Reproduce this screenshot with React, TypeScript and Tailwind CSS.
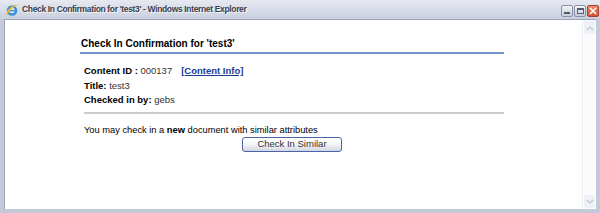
import React from "react";

const sans = { fontFamily: "'Liberation Sans', Arial, sans-serif" };

function IeLogo() {
  return (
    <svg width="14" height="14" viewBox="0 0 16 16">
      <circle cx="8" cy="8.5" r="6" fill="#3d8fd8" />
      <circle cx="8" cy="8.5" r="3.2" fill="#dfeffc" />
      <rect x="4.5" y="8" width="7" height="1.6" fill="#3d8fd8" />
      <path d="M1 13 C 3 6, 10 1, 15 2 C 12 3, 6 7, 3 13 Z" fill="#f2b632" />
    </svg>
  );
}

function TitleButton({ kind }: { kind: "min" | "max" | "close" }) {
  if (kind === "close") {
    return (
      <div className="w-[12px] h-[12px] rounded-[2px] border border-[#a04030] bg-gradient-to-b from-[#f08a6a] to-[#d4502e] flex items-center justify-center">
        <svg width="8" height="8" viewBox="0 0 8 8">
          <path d="M1 1 L7 7 M7 1 L1 7" stroke="#fff" strokeWidth="1.6" />
        </svg>
      </div>
    );
  }
  return (
    <div className="w-[12px] h-[12px] rounded-[2px] border border-[#8a90a8] bg-gradient-to-b from-[#f4f5f8] to-[#c8ccd8] flex items-center justify-center">
      {kind === "min" ? (
        <div className="w-[6px] h-[2px] bg-[#555a70] mt-[4px]" />
      ) : (
        <div className="w-[7px] h-[6px] border border-[#555a70] border-t-2" />
      )}
    </div>
  );
}

function Scrollbar() {
  return (
    <div className="w-[14px] flex flex-col bg-[#fafbfd] border-l border-[#eef0f4]">
      <div className="h-[13px] m-[1px] rounded-[2px] bg-[#eef1f8] flex items-center justify-center">
        <svg width="8" height="6" viewBox="0 0 8 6">
          <path d="M1 5 L4 2 L7 5" stroke="#c7cbd6" strokeWidth="1.5" fill="none" />
        </svg>
      </div>
      <div className="flex-1" />
      <div className="h-[13px] m-[1px] rounded-[2px] bg-[#eef1f8] flex items-center justify-center">
        <svg width="8" height="6" viewBox="0 0 8 6">
          <path d="M1 1 L4 4 L7 1" stroke="#c7cbd6" strokeWidth="1.5" fill="none" />
        </svg>
      </div>
    </div>
  );
}

export default function App() {
  return (
    <div className="w-[600px] h-[213px] flex flex-col bg-[#c4c9d9] overflow-hidden" style={sans}>
      <div className="h-[19px] flex items-center pl-[5px] pr-[1px] bg-gradient-to-b from-[#e6e9f0] to-[#c9cfdf]">
        <IeLogo />
        <span className="ml-[3px] text-[8.5px] tracking-[-0.35px] font-bold text-[#3c3f4c] [text-shadow:1px_1px_0_#f4f6fa]">
          Check In Confirmation for 'test3' - Windows Internet Explorer
        </span>
        <div className="ml-auto flex gap-[1px] mt-[2px]">
          <TitleButton kind="min" />
          <TitleButton kind="max" />
          <TitleButton kind="close" />
        </div>
      </div>
      <div className="flex-1 flex px-[4px] pb-[4px]">
        <div className="flex-1 flex border-l border-t border-[#9da3b6] bg-white">
          <div className="flex-1 pl-[75px] pr-[78px] pt-[17px]">
            <div className="text-[10px] leading-[13px] font-bold text-black pl-[1px] pb-[2px] border-b-2 border-[#7396cc]">
              Check In Confirmation for 'test3'
            </div>
            <div className="pl-[4px] pt-[10px] text-[9.5px] leading-[14.5px] text-black">
              <div>
                <span className="font-bold">Content ID : </span>
                <span className="text-[#333]">000137</span>
                <a className="ml-[9px] font-bold text-[#1c3a8f] underline">[Content Info]</a>
              </div>
              <div>
                <span className="font-bold">Title: </span>
                <span className="text-[#333]">test3</span>
              </div>
              <div>
                <span className="font-bold">Checked in by: </span>
                <span className="text-[#333]">gebs</span>
              </div>
            </div>
            <div className="ml-[4px] mt-[4px] border-t-2 border-[#cbcbcf]" />
            <div className="pl-[4px] pt-[10px] text-[9.3px] leading-[12px] text-black">
              You may check in a <b>new</b> document with similar attributes
            </div>
            <div className="flex justify-center mt-[1px]">
              <button className="w-[100px] h-[15px] rounded-[3px] border border-[#4a64a6] bg-gradient-to-b from-white via-[#f4f5f8] to-[#d2d6e4] text-[9.5px] leading-[12px] text-[#333]">
                Check In Similar
              </button>
            </div>
          </div>
          <Scrollbar />
        </div>
      </div>
    </div>
  );
}
